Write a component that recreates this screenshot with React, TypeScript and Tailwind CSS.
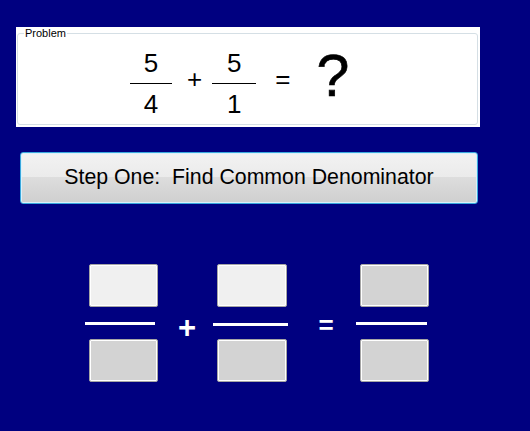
import React from 'react';

const font = { fontFamily: '"Liberation Sans", Arial, sans-serif' };

function Fraction({ top, bottom, width }: { top: string; bottom: string; width: string }) {
  return (
    <div className={`flex flex-col items-center ${width}`}>
      <span className="text-[26px] leading-[30px] text-black">{top}</span>
      <div className="mt-[5px] h-px w-full bg-black" />
      <span className="mt-[5px] text-[26px] leading-[30px] text-black">{bottom}</span>
    </div>
  );
}

function InputBox({ light, width }: { light?: boolean; width: string }) {
  return (
    <div
      className={`ml-[4px] h-[43px] rounded-[2px] border border-[#a5a5a5] shadow-[inset_0_0_0_1px_#ffffff] ${width} ${
        light ? 'bg-[#f0f0f0]' : 'bg-[#d3d3d3]'
      }`}
    />
  );
}

export default function App() {
  return (
    <div className="flex h-[431px] w-[530px] flex-col overflow-hidden bg-[#000080]" style={font}>
      {/* Problem group box */}
      <div className="ml-[16px] mt-[27px] h-[100px] w-[464px] bg-white pl-[1px]">
        <fieldset className="h-[98px] w-[461px] rounded-[3px] border border-[#d5dfe5] p-0">
          <legend className="ml-[6px] px-[1px] text-[11px] leading-[13px] text-black">Problem</legend>
          <div className="flex items-start">
            <div className="ml-[112px] mt-[8px]">
              <Fraction top="5" bottom="4" width="w-[42px]" />
            </div>
            <span className="ml-[15px] mt-[24px] text-[26px] leading-[30px] text-black">+</span>
            <div className="ml-[10px] mt-[8px]">
              <Fraction top="5" bottom="1" width="w-[44px]" />
            </div>
            <span className="ml-[19px] mt-[24px] text-[26px] leading-[30px] text-black">=</span>
            <span className="ml-[26px] mt-[7px] text-[59px] leading-none text-black [-webkit-text-stroke:0.6px_black]">?</span>
          </div>
        </fieldset>
      </div>

      {/* Step button */}
      <button className="ml-[20px] mt-[25px] flex h-[52px] w-[458px] items-center justify-center rounded-[3px] border border-[#3aa8dd] bg-[linear-gradient(to_bottom,#f2f2f2_0%,#ebebeb_48%,#dddddd_49%,#cfcfcf_100%)] shadow-[inset_0_0_0_1px_#d8f0fb]">
        <span className="whitespace-pre text-[21.3px] text-black">Step One:  Find Common Denominator</span>
      </button>

      {/* Answer boxes */}
      <div className="mt-[60px] flex items-start">
        <div className="ml-[85px] flex w-[73px] flex-col">
          <InputBox light width="w-[69px]" />
          <div className="mt-[15px] h-[3px] w-[70px] bg-white" />
          <div className="mt-[14px]">
            <InputBox width="w-[69px]" />
          </div>
        </div>
        <div className="mt-[48px] flex w-[55px] justify-center pl-[3px]">
          <span className="text-[31px] font-bold leading-none text-white">+</span>
        </div>
        <div className="flex w-[75px] flex-col">
          <InputBox light width="w-[70px]" />
          <div className="mt-[16px] h-[3px] w-[75px] bg-white" />
          <div className="mt-[13px]">
            <InputBox width="w-[70px]" />
          </div>
        </div>
        <div className="mt-[48px] flex w-[68px] justify-center pl-[8px]">
          <span className="text-[26px] font-bold leading-none text-white">=</span>
        </div>
        <div className="flex w-[73px] flex-col">
          <InputBox width="w-[69px]" />
          <div className="mt-[15px] h-[3px] w-[71px] bg-white" />
          <div className="mt-[14px]">
            <InputBox width="w-[69px]" />
          </div>
        </div>
      </div>
    </div>
  );
}
